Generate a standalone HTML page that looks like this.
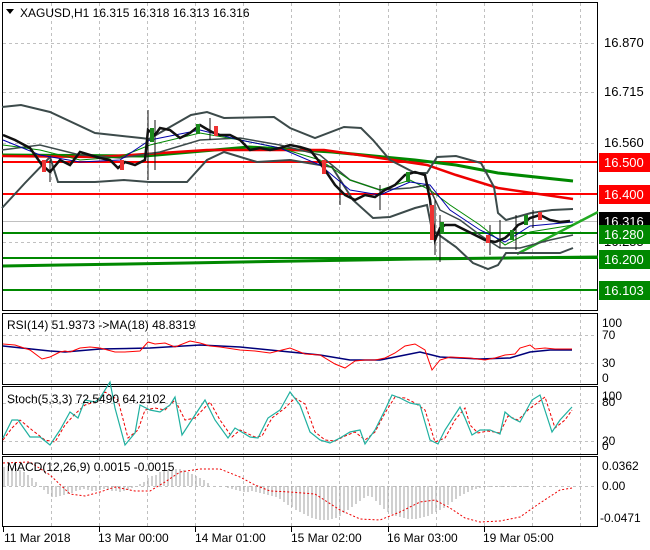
<!DOCTYPE html>
<html><head><meta charset="utf-8"><style>
body{margin:0;background:#fff;width:650px;height:550px;overflow:hidden;font-family:"Liberation Sans",sans-serif}
svg{display:block}
text{font-family:"Liberation Sans",sans-serif;font-size:12px}
</style></head><body>
<svg width="650" height="550" viewBox="0 0 650 550">
<rect width="650" height="550" fill="#fff"/>
<g fill="none" stroke="#000" stroke-width="1">
<rect x="2.5" y="2.5" width="595" height="308"/>
<rect x="2.5" y="313.5" width="595" height="71"/>
<rect x="2.5" y="386.5" width="595" height="68"/>
<rect x="2.5" y="456.5" width="595" height="70"/>
</g>
<g stroke="#c0c0c0" stroke-dasharray="3,3" stroke-width="1">
<path d="M51.5 3V310M99.5 3V310M147.5 3V310M195.5 3V310M243.5 3V310M291.5 3V310M339.5 3V310M388.5 3V310M436.5 3V310M484.5 3V310M532.5 3V310M580.5 3V310"/>
<path d="M51.5 314V384M99.5 314V384M147.5 314V384M195.5 314V384M243.5 314V384M291.5 314V384M339.5 314V384M388.5 314V384M436.5 314V384M484.5 314V384M532.5 314V384M580.5 314V384"/>
<path d="M51.5 387V454M99.5 387V454M147.5 387V454M195.5 387V454M243.5 387V454M291.5 387V454M339.5 387V454M388.5 387V454M436.5 387V454M484.5 387V454M532.5 387V454M580.5 387V454"/>
<path d="M51.5 457V526M99.5 457V526M147.5 457V526M195.5 457V526M243.5 457V526M291.5 457V526M339.5 457V526M388.5 457V526M436.5 457V526M484.5 457V526M532.5 457V526M580.5 457V526"/>
<path d="M3 43.5H597M3 92.5H597M3 143.5H597M3 242.5H597M3 335.5H597M3 363.5H597M3 403.5H597M3 441.5H597M3 486.5H597"/>
</g>
<path d="M3 221.5H597" stroke="#c0c0c0"/>
<path d="M3 162H597" stroke="#f00" stroke-width="2"/>
<path d="M3 194H597" stroke="#f00" stroke-width="2"/>
<path d="M3 233H597" stroke="#080" stroke-width="2"/>
<path d="M3 258H597" stroke="#080" stroke-width="2"/>
<path d="M3 290H597" stroke="#080" stroke-width="2"/>
<path d="M3 266L62 265L187 263L299 261L415 259L598 257" stroke="#080" stroke-width="3" fill="none"/>
<path d="M517 254L598 212" stroke="#2a2" stroke-width="2.5"/>
<polyline fill="none" stroke="#080" stroke-width="3" points="2,155 145,156 249,147 332,152 415,160 456,165 498,173 573,181"/>
<polyline fill="none" stroke="#e00" stroke-width="2.5" points="2,156 100,157 207,150 324,150 373,157 427,165 456,175 498,188 573,199"/>
<g fill="none" stroke="#3c4a4a" stroke-width="2">
<polyline points="2,107 21,105 50,112 95,133 141,138 149,139 191,115 207,112 224,118 274,117 290,128 315,138 344,127 361,128 373,140 390,160 415,173 427,173 437,157 456,156 481,163 494,187 498,213 506,220 531,213 552,210 573,209"/>
<polyline points="2,208 25,183 50,157 58,182 95,182 124,180 149,182 187,182 207,160 224,152 257,162 290,160 332,167 353,200 373,218 390,217 415,208 427,205 432,230 456,247 473,263 488,269 498,265 506,253 535,253 560,253 573,248"/>
<polyline stroke-width="1.5" points="2,150 40,145 80,155 120,158 160,152 200,140 240,138 280,145 320,155 350,180 380,190 410,188 428,185 440,210 460,220 480,235 500,248 520,248 550,240 573,235"/>
</g>
<polyline fill="none" stroke="#080" stroke-width="1" points="3,145 40,150 80,160 120,157 150,145 200,133 240,140 280,148 320,160 350,180 380,190 410,180 430,190 450,205 480,225 505,245 530,232 573,225"/>
<polyline fill="none" stroke="#00a" stroke-width="1" points="3,140 40,155 80,162 120,160 150,140 200,130 240,140 280,148 320,165 350,190 380,195 410,182 430,185 450,210 480,230 505,242 530,226 573,222"/>
<polyline fill="none" stroke="#111" stroke-width="2.5" points="3,135 15,140 30,148 42,165 50,172 60,160 70,165 80,152 90,155 100,158 110,160 118,168 125,162 135,165 145,160 148,130 155,135 160,128 170,130 180,138 190,133 200,125 205,128 212,132 220,135 230,135 240,140 250,150 260,148 270,150 280,148 290,145 300,147 310,150 318,160 325,170 335,185 345,195 355,200 365,195 375,197 385,190 395,185 405,175 415,172 425,175 430,200 435,240 440,228 445,225 455,225 465,230 475,235 485,240 495,242 505,238 512,232 518,225 525,222 530,218 540,215 550,220 560,222 570,221"/>
<g stroke="#111" stroke-width="1"><path d="M50 160V182M148 110V180M155 120V170M210 118V140M340 180V205M380 185V210M435 200V255M440 215V262M490 225V255M500 220V248M516 215V250M533 210V228"/></g>
<g fill="#e33"><rect x="42" y="160" width="4" height="12"/><rect x="120" y="160" width="4" height="10"/><rect x="214" y="126" width="4" height="10"/><rect x="322" y="160" width="4" height="14"/><rect x="430" y="205" width="4" height="35"/><rect x="486" y="235" width="4" height="8"/><rect x="538" y="212" width="4" height="8"/></g>
<g fill="#1a8a1a"><rect x="150" y="128" width="4" height="14"/><rect x="196" y="124" width="4" height="10"/><rect x="406" y="172" width="4" height="10"/><rect x="440" y="222" width="4" height="12"/><rect x="510" y="230" width="4" height="10"/><rect x="524" y="215" width="4" height="10"/></g>
<g>
<text x="604" y="47" style="font-size:13px">16.870</text>
<text x="604" y="96" style="font-size:13px">16.715</text>
<text x="604" y="147" style="font-size:13px">16.560</text>
<text x="604" y="246" style="font-size:13px">16.255</text>
<rect x="599" y="153" width="51" height="19" fill="#f00"/><text x="604" y="167" fill="#fff" style="font-size:13px">16.500</text>
<rect x="599" y="185" width="51" height="19" fill="#f00"/><text x="604" y="199" fill="#fff" style="font-size:13px">16.400</text>
<rect x="599" y="212" width="51" height="18" fill="#000"/><text x="604" y="226" fill="#fff" style="font-size:13px">16.316</text>
<rect x="599" y="225" width="51" height="19" fill="#080"/><text x="604" y="239" fill="#fff" style="font-size:13px">16.280</text>
<rect x="599" y="250" width="51" height="19" fill="#080"/><text x="604" y="264" fill="#fff" style="font-size:13px">16.200</text>
<rect x="599" y="281" width="51" height="19" fill="#080"/><text x="604" y="295" fill="#fff" style="font-size:13px">16.103</text>
</g>
<path d="M6 9L14 9L10 14Z" fill="#000"/>
<text x="20" y="17">XAGUSD,H1  16.315 16.318 16.313 16.316</text>
<polyline fill="none" stroke="#00007a" stroke-width="1.5" points="3,346 50,351 65,352 100,349 150,348 200,345 240,347 280,351 320,355 350,360 380,360 420,352 440,357 480,359 510,358 530,352 550,350 572,350"/>
<polyline fill="none" stroke="#f00" stroke-width="1" points="3,344 15,345 30,350 42,359 50,357 60,352 65,351 70,352 80,348 90,347 100,348 115,352 125,352 140,351 148,342 155,344 165,343 175,347 190,341 200,343 210,346 220,347 240,350 255,351 270,353 290,348 305,354 320,355 335,364 345,368 355,361 365,360 375,360 385,358 395,353 405,346 415,344 425,350 432,370 440,360 450,357 470,358 485,360 495,358 505,355 515,354 520,348 530,345 535,349 545,348 555,349 565,349 572,349"/>
<text x="7" y="329">RSI(14) 51.9373  -&gt;MA(18) 48.8319</text>
<text x="602" y="327">100</text><text x="602" y="339">70</text><text x="602" y="367">30</text><text x="602" y="382">0</text>
<polyline fill="none" stroke="#e00" stroke-width="1" stroke-dasharray="3,2" points="3,440 12,428 20,420 32,430 45,440 55,442 65,425 75,414 85,405 95,402 105,392 118,400 128,438 138,430 145,410 155,408 165,410 175,400 185,420 195,418 210,402 220,420 232,437 240,430 255,437 262,436 272,418 285,408 295,398 305,404 315,432 325,440 335,441 345,436 355,432 365,440 375,432 385,413 395,397 405,398 415,403 425,410 435,442 445,438 455,420 465,408 470,425 478,433 488,431 500,433 508,416 518,420 528,410 545,397 555,428 565,420 572,410"/>
<polyline fill="none" stroke="#20b0a0" stroke-width="1.2" points="3,438 12,420 18,420 30,437 40,437 50,445 60,430 70,412 78,418 85,400 95,402 100,398 110,382 115,408 125,445 135,433 140,405 150,410 160,412 170,405 175,397 182,435 195,415 205,400 215,420 228,438 235,428 250,437 258,438 268,418 280,410 290,392 300,405 310,432 320,440 330,443 340,438 350,432 360,430 365,444 375,430 385,410 392,395 400,398 410,403 420,405 430,440 438,444 445,430 460,407 465,418 472,435 480,430 490,430 500,434 505,412 512,418 520,422 532,400 540,395 552,432 560,420 572,407"/>
<text x="7" y="403">Stoch(5,3,3) 72.5490 64.2102</text>
<text x="602" y="400">100</text><text x="602" y="406">80</text><text x="602" y="445">20</text><text x="602" y="450">0</text>
<path stroke="#b0b0b0" stroke-width="1.2" d="M4 486V467M8 486V466M12 486V468M16 486V468M20 486V470M24 486V472M28 486V475M32 486V478M36 486V482M44 486V490M48 486V494M52 486V497M56 486V497M60 486V496M64 486V495M68 486V494M72 486V493M76 486V491M80 486V490M84 486V489M88 486V490M92 486V491M96 486V491M100 486V490M104 486V489M108 486V490M112 486V491M116 486V491M120 486V492M124 486V491M128 486V490M132 486V488M140 486V484M144 486V482M148 486V478M152 486V476M156 486V475M160 486V472M164 486V470M168 486V470M172 486V470M176 486V469M180 486V469M184 486V470M188 486V472M192 486V474M196 486V476M200 486V478M204 486V480M208 486V483M228 486V488M232 486V489M236 486V490M240 486V491M244 486V492M248 486V492M252 486V491M256 486V492M260 486V493M264 486V494M268 486V495M272 486V496M276 486V497M280 486V499M284 486V502M288 486V505M292 486V507M296 486V510M300 486V512M304 486V514M308 486V516M312 486V518M316 486V519M320 486V520M324 486V520M328 486V520M332 486V519M336 486V518M340 486V516M344 486V513M348 486V510M352 486V507M356 486V504M360 486V501M364 486V498M368 486V496M372 486V497M376 486V501M380 486V505M384 486V509M388 486V512M392 486V514M396 486V516M400 486V517M404 486V518M408 486V519M412 486V519M416 486V519M420 486V518M424 486V517M428 486V516M432 486V514M436 486V512M440 486V510M444 486V508M448 486V505M452 486V502M456 486V499M460 486V496M464 486V494M468 486V492M472 486V490M476 486V489M480 486V488M484 486V487M488 486V487M492 486V487M496 486V487M500 486V487M504 486V487M508 486V487M512 486V487M516 486V487M520 486V487M524 486V487M528 486V487"/>
<polyline fill="none" stroke="#e00" stroke-width="1" stroke-dasharray="2,2" points="3,463 30,462 50,475 70,494 85,496 100,492 115,487 135,491 150,491 165,482 180,472 200,469 220,469 240,477 255,485 270,491 290,492 315,494 340,510 360,519 380,520 400,512 420,502 435,500 450,508 465,518 480,522 500,521 520,517 540,503 560,490 572,488"/>
<text x="7" y="471">MACD(12,26,9) 0.0015 -0.0015</text>
<text x="602" y="470">0.0362</text><text x="602" y="490">0.00</text><text x="600" y="522">-0.0471</text>
<path d="M3.5 527V532M99.5 527V532M195.5 527V532M291.5 527V532M388.5 527V532M484.5 527V532" stroke="#000"/>
<text x="4" y="542">11 Mar 2018</text>
<text x="98" y="542">13 Mar 00:00</text>
<text x="195" y="542">14 Mar 01:00</text>
<text x="291" y="542">15 Mar 02:00</text>
<text x="387" y="542">16 Mar 03:00</text>
<text x="483" y="542">19 Mar 05:00</text>
</svg>
</body></html>
